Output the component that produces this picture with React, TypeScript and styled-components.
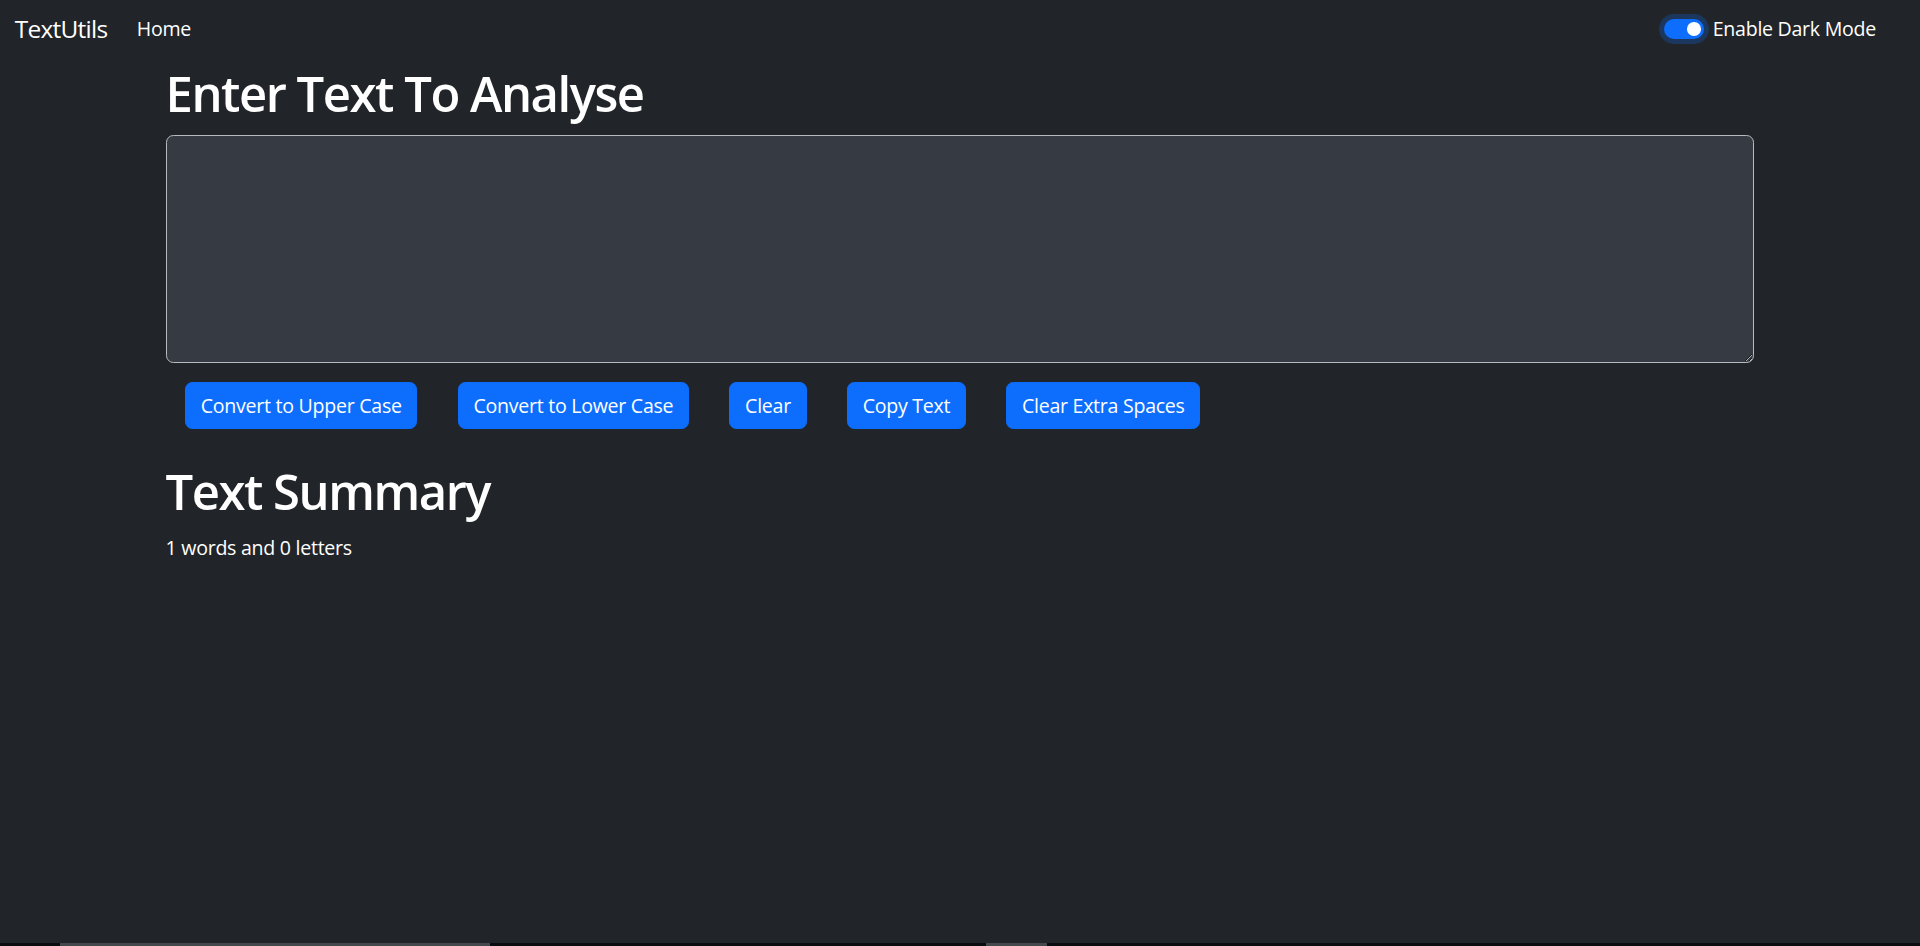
import React, { useState } from "react";
import styled, { createGlobalStyle } from "styled-components";

// the reference was drawn at 1568 css px and scaled to 1920, so 1rem = 16 * 1.2245
const GlobalStyle = createGlobalStyle`
  html {
    font-size: 19.592px;
  }
  body {
    margin: 0;
    background: #212529;
    color: #fff;
    font-family: "Open Sans", "Noto Sans", sans-serif;
    letter-spacing: -0.014em;
    -webkit-font-smoothing: antialiased;
  }
  * {
    box-sizing: border-box;
  }
`;

const Page = styled.div`
  min-height: 100vh;
  display: flex;
  flex-direction: column;
`;

const Navbar = styled.nav`
  display: flex;
  align-items: center;
  padding: 0.55rem 0.75rem 0.85rem;
`;

const Brand = styled.a`
  font-size: 1.25rem;
  line-height: 1.875rem;
  letter-spacing: -0.03em;
  margin-right: 1rem;
  color: #fff;
  text-decoration: none;
`;

const NavLink = styled.a`
  font-size: 1rem;
  line-height: 1.5rem;
  padding: 0 0.5rem;
  color: #fff;
  text-decoration: none;
`;

const SwitchWrap = styled.label`
  margin-left: auto;
  margin-right: 1.5rem;
  display: flex;
  align-items: center;
  gap: 0.45rem;
  font-size: 1rem;
  line-height: 1.5rem;
  cursor: pointer;
`;

const Track = styled.span<{ $on: boolean }>`
  width: 2.05rem;
  height: 1rem;
  border-radius: 1rem;
  padding: 0.15rem;
  display: flex;
  justify-content: ${(p) => (p.$on ? "flex-end" : "flex-start")};
  align-items: center;
  background: ${(p) => (p.$on ? "#0d6efd" : "#343a40")};
  box-shadow: 0 0 0 0.25rem rgba(13, 110, 253, 0.25);
`;

const Knob = styled.span`
  width: 0.7rem;
  height: 0.7rem;
  border-radius: 50%;
  background: #fff;
`;

const Container = styled.main<{ $top?: number }>`
  width: 100%;
  max-width: 82.6rem;
  margin: ${(p) => p.$top || 0}rem auto 0;
  padding: 0 0.75rem;
`;

const Heading = styled.h1`
  font-size: 2.5rem;
  font-weight: 600;
  letter-spacing: -0.03em;
  line-height: 1.2;
  margin: 0 0 0.6rem;
`;

const TextBox = styled.textarea`
  display: block;
  width: 100%;
  height: 11.65rem;
  margin-bottom: 1rem;
  padding: 0.375rem 0.75rem;
  font: inherit;
  font-size: 1rem;
  color: #fff;
  background: #363a42;
  border: 1px solid #b8bcc1;
  border-radius: 0.375rem;
  outline: none;
`;

const ButtonRow = styled.div`
  display: flex;
  gap: 2.0625rem;
  padding-left: 1rem;
`;

const Button = styled.button`
  font-family: inherit;
  font-size: 1rem;
  letter-spacing: inherit;
  line-height: 1.5rem;
  height: 2.375rem;
  padding: 0 0.75rem;
  color: #fff;
  background: #0d6efd;
  border: 1px solid #0d6efd;
  border-radius: 0.375rem;
  cursor: pointer;
`;

const Summary = styled.p`
  font-size: 1rem;
  line-height: 1.5;
  margin: 0 0 1rem;
`;

const ScrollStrip = styled.div`
  margin-top: auto;
  height: 3px;
  background: #0b0c0e;
  display: flex;
`;

const Thumb = styled.span<{ $left: number; $width: number }>`
  margin-left: ${(p) => p.$left}px;
  width: ${(p) => p.$width}px;
  background: #45484d;
`;

const buttons = [
  "Convert to Upper Case",
  "Convert to Lower Case",
  "Clear",
  "Copy Text",
  "Clear Extra Spaces",
];

const App: React.FC = () => {
  const [text, setText] = useState<string>("");
  const [dark, setDark] = useState<boolean>(true);
  const words = text.split(" ").length;

  return (
    <Page>
      <GlobalStyle />
      <Navbar>
        <Brand href="#">TextUtils</Brand>
        <NavLink href="#">Home</NavLink>
        <SwitchWrap onClick={() => setDark(!dark)}>
          <Track $on={dark}>
            <Knob />
          </Track>
          Enable Dark Mode
        </SwitchWrap>
      </Navbar>

      <Container>
        <Heading>Enter Text To Analyse</Heading>
        <TextBox value={text} onChange={(e) => setText(e.target.value)} />
        <ButtonRow>
          {buttons.map((b) => (
            <Button key={b}>{b}</Button>
          ))}
        </ButtonRow>
      </Container>

      <Container $top={1.7}>
        <Heading>Text Summary</Heading>
        <Summary>
          {words} words and {text.length} letters
        </Summary>
      </Container>

      <ScrollStrip>
        <Thumb $left={60} $width={430} />
        <Thumb $left={496} $width={61} />
      </ScrollStrip>
    </Page>
  );
};

export default App;
